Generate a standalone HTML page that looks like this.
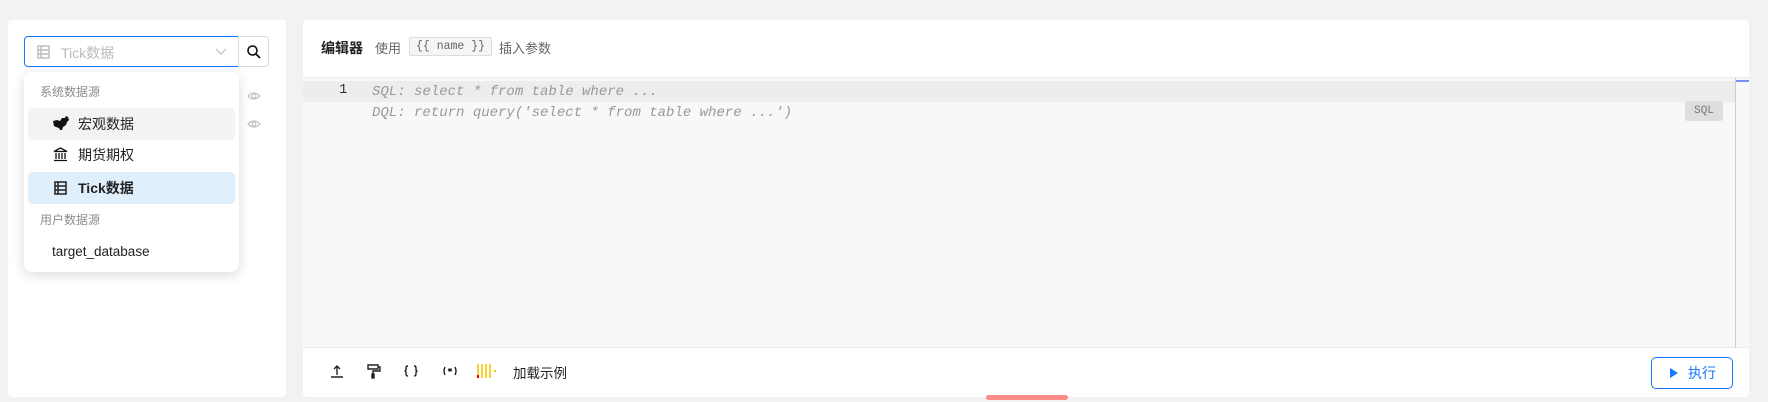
<!DOCTYPE html>
<html><head><meta charset="utf-8"><style>
*{box-sizing:border-box;margin:0;padding:0}
body{width:1768px;height:402px;background:#f2f2f2;font-family:"Liberation Sans","Noto Sans CJK SC",sans-serif;position:relative;overflow:hidden;color:#222}
.abs{position:absolute}
.lp{left:8px;top:20px;width:278px;height:377px;background:#fff;border-radius:4px}
.mp{left:303px;top:20px;width:1446px;height:377px;background:#fff;border-radius:4px;overflow:hidden}
.sel{left:24px;top:36px;width:215px;height:31px;border:1.5px solid #1677ff;border-radius:4px 0 0 4px;background:#fff}
.srch{left:238px;top:36px;width:31px;height:31px;border:1px solid #d9d9d9;border-radius:0 4px 4px 0;background:#fff}
.dd{left:24px;top:72px;width:215px;height:200px;background:#fff;border-radius:8px;box-shadow:0 3px 12px rgba(0,0,0,.15)}
.grp{font-size:12px;color:#8c8c8c;position:absolute;left:16px}
.it{position:absolute;left:4px;width:207px;height:32px;border-radius:4px;font-size:14px;line-height:32px;padding-left:50px}
.mono{font-family:"Liberation Mono",monospace}
</style></head><body>
<div class="abs lp"></div>
<svg class="abs" style="left:246px;top:90px" width="16" height="40" viewBox="0 0 16 40"><g fill="none" stroke="#bbb" stroke-width="1.1"><path d="M2 6 Q8 0 14 6 Q8 12 2 6Z"/><circle cx="8" cy="6" r="2"/><path d="M2 34 Q8 28 14 34 Q8 40 2 34Z"/><circle cx="8" cy="34" r="2"/></g></svg>
<div class="abs sel">
<svg class="abs" style="left:12px;top:8px" width="13" height="14" viewBox="0 0 13 14"><g fill="none" stroke="#bbb" stroke-width="1.4"><rect x="1" y="1" width="11" height="12"/><path d="M1 5h11M1 9h11M4 1v12"/></g></svg>
<span class="abs" style="left:36px;top:6px;font-size:14px;color:#bbb">Tick数据</span>
<svg class="abs" style="left:190px;top:11px" width="12" height="8" viewBox="0 0 12 8"><path d="M1 1l5 5 5-5" fill="none" stroke="#bbb" stroke-width="1.2"/></svg>
</div>
<div class="abs srch"><svg class="abs" style="left:7px;top:7px" width="16" height="16" viewBox="0 0 16 16"><circle cx="6.5" cy="6.5" r="4.5" fill="none" stroke="#111" stroke-width="1.6"/><path d="M10 10l4 4" stroke="#111" stroke-width="1.8"/></svg></div>
<div class="abs dd">
<div class="grp" style="top:11px">系统数据源</div>
<div class="it" style="top:36px;background:#f3f3f3">宏观数据</div>
<svg class="abs" style="left:28px;top:44px" width="18" height="16" viewBox="0 0 18 16"><path d="M1 5l4-1 3 1 2-3 3 0 1-2 2 1 1 3-2 2-1 3-3 2-1 3-2 0-1-2-3-1-2-1z" fill="#111"/></svg>
<div class="it" style="top:67px">期货期权</div>
<svg class="abs" style="left:29px;top:75px" width="15" height="15" viewBox="0 0 15 15"><g fill="none" stroke="#111" stroke-width="1.3"><path d="M1 4.5L7.5 1 14 4.5z"/><path d="M3 6v6M6 6v6M9 6v6M12 6v6M1 13.5h13"/></g></svg>
<div class="it" style="top:100px;background:#e0effc;font-weight:bold">Tick数据</div>
<svg class="abs" style="left:30px;top:109px" width="13" height="14" viewBox="0 0 13 14"><g fill="none" stroke="#222" stroke-width="1.5"><rect x="1" y="1" width="11" height="12"/><path d="M1 5h11M1 9h11M4 1v12"/></g></svg>
<div class="grp" style="top:139px">用户数据源</div>
<div class="it" style="top:164px;padding-left:24px;font-size:13.5px">target_database</div>
</div>
<div class="abs mp">
<div class="abs" style="left:18px;top:18px;font-size:14px;font-weight:bold">编辑器</div>
<div class="abs" style="left:72px;top:18px;font-size:13px;color:#666">使用</div>
<div class="abs mono" style="left:106px;top:17px;width:83px;height:19px;border:1px solid #ddd;border-radius:2px;background:#f5f5f5;font-size:11.5px;line-height:17px;color:#666;text-align:center">{{ name }}</div>
<div class="abs" style="left:196px;top:18px;font-size:13px;color:#666">插入参数</div>
<div class="abs" style="left:0;top:57px;width:1446px;height:271px;background:#f8f8f8;border-top:1px solid #ececec;border-bottom:1px solid #ececec"></div>
<div class="abs" style="left:0;top:61px;width:1432px;height:21px;background:#ededed"></div>
<div class="abs" style="left:1432px;top:58px;width:1px;height:270px;background:#ccc"></div>
<div class="abs" style="left:1433px;top:60px;width:13px;height:2px;background:#7c8cf8"></div>
<div class="abs mono" style="left:36px;top:62px;font-size:14px;color:#333">1</div>
<div class="abs mono" style="left:69px;top:62px;font-size:14px;font-style:italic;color:#999;line-height:21px;white-space:pre">SQL: select * from table where ...
DQL: return query('select * from table where ...')</div>
<div class="abs mono" style="left:1382px;top:81px;width:38px;height:20px;background:#dedede;border-radius:3px;font-size:11px;color:#777;text-align:center;line-height:20px">SQL</div>
<svg class="abs" style="left:26px;top:343px" width="200" height="16" viewBox="0 0 200 16">
<g stroke="#222" stroke-width="1.4" fill="none"><path d="M8 12V3M5 6l3-3 3 3M2 14h12"/>
<path d="M39 2h10v4H39zM49 4h2v4h-7v3"/><rect x="43" y="11" width="2" height="4" fill="#222"/>
<path d="M79 3q-2 0-2 2v1.5q0 1.5-1.5 1.5 1.5 0 1.5 1.5V11q0 2 2 2M85 3q2 0 2 2v1.5q0 1.5 1.5 1.5-1.5 0-1.5 1.5V11q0 2-2 2"/>
<path d="M116 4q-2 4 0 8M126 4q2 4 0 8"/><path d="M121 5v4M119 6l4 2M123 6l-4 2" stroke-width="1"/></g>
<g stroke="#f5c400" stroke-width="1.6"><path d="M149 1v14M153 1v14M157 1v14M161 1v14"/></g><rect x="148" y="12" width="2" height="3" fill="#e00"/><rect x="165" y="7" width="2" height="2" fill="#f5c400"/></svg>
<div class="abs" style="left:210px;top:342px;font-size:13.5px">加载示例</div>
<div class="abs" style="left:1348px;top:337px;width:82px;height:32px;border:1px solid #1677ff;border-radius:5px;color:#1677ff;font-size:14px;line-height:30px">
<svg class="abs" style="left:18px;top:10px" width="8" height="10"><path d="M0 0l8 5-8 5z" fill="#1677ff"/></svg>
<span class="abs" style="left:36px;top:0">执行</span></div>
</div>
<div class="abs" style="left:986px;top:395px;width:82px;height:5px;background:#ff8a8a;border-radius:3px"></div>
</body></html>
